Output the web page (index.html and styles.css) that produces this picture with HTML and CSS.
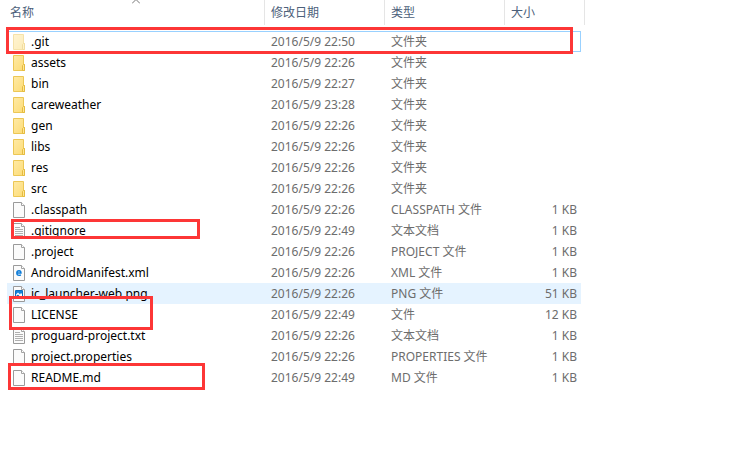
FILE: index.html
```html
<!DOCTYPE html>
<html lang="zh-CN">
<head>
  <meta charset="UTF-8">
  <title>文件列表</title>
  <link rel="stylesheet" href="styles.css">
</head>
<body>

  <!-- icons -->
  <svg class="sprite" aria-hidden="true">
    <linearGradient id="fold" x1="0" y1="0" x2="1" y2="1">
      <stop offset="0" stop-color="#ffeaa6"/>
      <stop offset="1" stop-color="#fcdb74"/>
    </linearGradient>
    <symbol id="folder" viewBox="0 0 14 16">
      <path d="M1.5 .5h10v9h1v6h-11z" fill="url(#fold)" stroke="#ecc755"/>
      <path d="M11.5 9.5h1v6h-2v-5z" fill="#ffe694" stroke="#e5bb3f"/>
    </symbol>
    <symbol id="page" viewBox="0 0 14 16">
      <path d="M1.5 .5h8l3 3v12h-11z" fill="#fbfbfb" stroke="#9a9a9a"/>
      <path d="M9.5 .5v3h3" fill="#fff" stroke="#a3a3a3"/>
    </symbol>
    <symbol id="text" viewBox="0 0 14 16">
      <use href="#page"/>
      <path d="M3 4.500h5M3 6.500h8M3 8.500h8M3 10.500h8M3 12.500h8" stroke="#b0b0b0"/>
    </symbol>
    <symbol id="xml" viewBox="0 0 14 16">
      <use href="#page"/>
      <path d="M4.800 8h4.200c0-1.500-.8-2.300-2-2.300S4.800 6.600 4.800 8.100s.9 2.300 2.300 2.300c.7 0 1.300-.2 1.800-.5" fill="none" stroke="#0b7bd8" stroke-width="1.400"/>
    </symbol>
    <symbol id="image" viewBox="0 0 14 16">
      <use href="#page"/>
      <path d="M3.500 4.500h7v7h-7z" fill="#fff" stroke="#0f6fc0"/>
      <path d="M4 5h6v3L9 7 8 8.500 6 6.500 4 8.500z" fill="#1583da"/>
      <path d="M4 11v-1l2-1.500 2.500 2.500z" fill="#0f6fc0"/>
    </symbol>
  </svg>

  <div class="explorer">
    <table class="files">
      <colgroup>
        <col class="col-name">
        <col class="col-date">
        <col class="col-type">
        <col class="col-size">
      </colgroup>
      <thead>
        <tr>
          <th aria-sort="ascending">
            <button type="button">名称</button>
            <svg class="sort" viewBox="0 0 8 4" aria-hidden="true"><path d="M0 3.500 4-.5 8 3.500" fill="none" stroke="#777"/></svg>
          </th>
          <th><button type="button">修改日期</button></th>
          <th><button type="button">类型</button></th>
          <th><button type="button">大小</button></th>
        </tr>
      </thead>
      <tbody>
        <tr class="focused hidden-file">
          <td><svg class="icon"><use href="#folder"/></svg>.git</td>
          <td>2016/5/9 22:50</td><td>文件夹</td><td></td>
        </tr>
        <tr>
          <td><svg class="icon"><use href="#folder"/></svg>assets</td>
          <td>2016/5/9 22:26</td><td>文件夹</td><td></td>
        </tr>
        <tr>
          <td><svg class="icon"><use href="#folder"/></svg>bin</td>
          <td>2016/5/9 22:27</td><td>文件夹</td><td></td>
        </tr>
        <tr>
          <td><svg class="icon"><use href="#folder"/></svg>careweather</td>
          <td>2016/5/9 23:28</td><td>文件夹</td><td></td>
        </tr>
        <tr>
          <td><svg class="icon"><use href="#folder"/></svg>gen</td>
          <td>2016/5/9 22:26</td><td>文件夹</td><td></td>
        </tr>
        <tr>
          <td><svg class="icon"><use href="#folder"/></svg>libs</td>
          <td>2016/5/9 22:26</td><td>文件夹</td><td></td>
        </tr>
        <tr>
          <td><svg class="icon"><use href="#folder"/></svg>res</td>
          <td>2016/5/9 22:26</td><td>文件夹</td><td></td>
        </tr>
        <tr>
          <td><svg class="icon"><use href="#folder"/></svg>src</td>
          <td>2016/5/9 22:26</td><td>文件夹</td><td></td>
        </tr>
        <tr>
          <td><svg class="icon"><use href="#page"/></svg>.classpath</td>
          <td>2016/5/9 22:26</td><td>CLASSPATH 文件</td><td>1 KB</td>
        </tr>
        <tr>
          <td><svg class="icon"><use href="#text"/></svg>.gitignore</td>
          <td>2016/5/9 22:49</td><td>文本文档</td><td>1 KB</td>
        </tr>
        <tr>
          <td><svg class="icon"><use href="#page"/></svg>.project</td>
          <td>2016/5/9 22:26</td><td>PROJECT 文件</td><td>1 KB</td>
        </tr>
        <tr>
          <td><svg class="icon"><use href="#xml"/></svg>AndroidManifest.xml</td>
          <td>2016/5/9 22:26</td><td>XML 文件</td><td>1 KB</td>
        </tr>
        <tr class="hovered">
          <td><svg class="icon"><use href="#image"/></svg>ic_launcher-web.png</td>
          <td>2016/5/9 22:26</td><td>PNG 文件</td><td>51 KB</td>
        </tr>
        <tr>
          <td><svg class="icon"><use href="#page"/></svg>LICENSE</td>
          <td>2016/5/9 22:49</td><td>文件</td><td>12 KB</td>
        </tr>
        <tr>
          <td><svg class="icon"><use href="#text"/></svg>proguard-project.txt</td>
          <td>2016/5/9 22:26</td><td>文本文档</td><td>1 KB</td>
        </tr>
        <tr>
          <td><svg class="icon"><use href="#page"/></svg>project.properties</td>
          <td>2016/5/9 22:26</td><td>PROPERTIES 文件</td><td>1 KB</td>
        </tr>
        <tr>
          <td><svg class="icon"><use href="#page"/></svg>README.md</td>
          <td>2016/5/9 22:49</td><td>MD 文件</td><td>1 KB</td>
        </tr>
      </tbody>
    </table>

    <!-- red marks over the list -->
    <div class="mark mark-git"></div>
    <div class="mark mark-ignore"></div>
    <div class="mark mark-license"></div>
    <div class="mark mark-readme"></div>
  </div>

</body>
</html>
```

FILE: styles.css
```css
*{box-sizing: border-box;}
body{
  margin: 0;
  background-color: #fff;
  color: #000;
  font-family: "Noto Sans", "Noto Sans CJK SC", sans-serif;
  font-size: 12px;
  line-height: 16px;
}
.sprite{
  position: absolute;
  width: 0;
  height: 0;
}
.explorer{
  position: relative;
  padding-bottom: 20px;
}

/* table */
.files{
  table-layout: fixed;
  width: 0;
  border-spacing: 0;
  white-space: nowrap;
}
.col-name{width: 265px;}
.col-date{width: 120px;}
.col-type{width: 120px;}
.col-size{width: 80px;}

/* header */
.files th{
  position: relative;
  height: 25px;
  padding: 0 0 0 6px;
  border-right: 1px solid #e5e5e5;
  text-align: left;
}
.files th:first-child{padding-left: 10px;}
.files th button{
  display: block;
  padding: 0;
  border: none;
  background: none;
  color: #4c607a;
  font: inherit;
  font-weight: normal;
}
.sort{
  position: absolute;
  top: 0;
  left: 50%;
  width: 8px;
  height: 4px;
}
.files tbody:before{  /* gap under the header */
  content: '';
  display: block;
  height: 6px;
}

/* rows */
.files td{
  height: 21px;
  padding: 3px 6px 2px;
  background-clip: padding-box;
  color: #6d6d6d;
}
.files td:first-child{
  padding-left: 5px;
  border-left: 7px solid transparent;
  color: #000;
}
.files td:last-child{
  padding-right: 4px;
  border-right: 4px solid transparent;
  text-align: right;
}
.icon{
  float: left;
  width: 14px;
  height: 16px;
  margin-right: 5px;
}
.hidden-file .icon{opacity: .5;}
.hovered td{background-color: #e5f3ff;}
.focused td{box-shadow: inset 0 1px #99d1ff, inset 0 -1px #99d1ff;}
.focused td:last-child{box-shadow: inset 0 1px #99d1ff, inset -1px -1px #99d1ff;}

/* red marks */
.mark{
  position: absolute;
  border: 3px solid #fd3636;
  pointer-events: none;
}
.mark-git{
  top: 27px;
  left: 6px;
  width: 567px;
  height: 27px;
}
.mark-ignore{
  top: 219px;
  left: 11px;
  width: 189px;
  height: 20px;
}
.mark-license{
  top: 296px;
  left: 9px;
  width: 144px;
  height: 34px;
}
.mark-readme{
  top: 363px;
  left: 8px;
  width: 197px;
  height: 27px;
}
```
